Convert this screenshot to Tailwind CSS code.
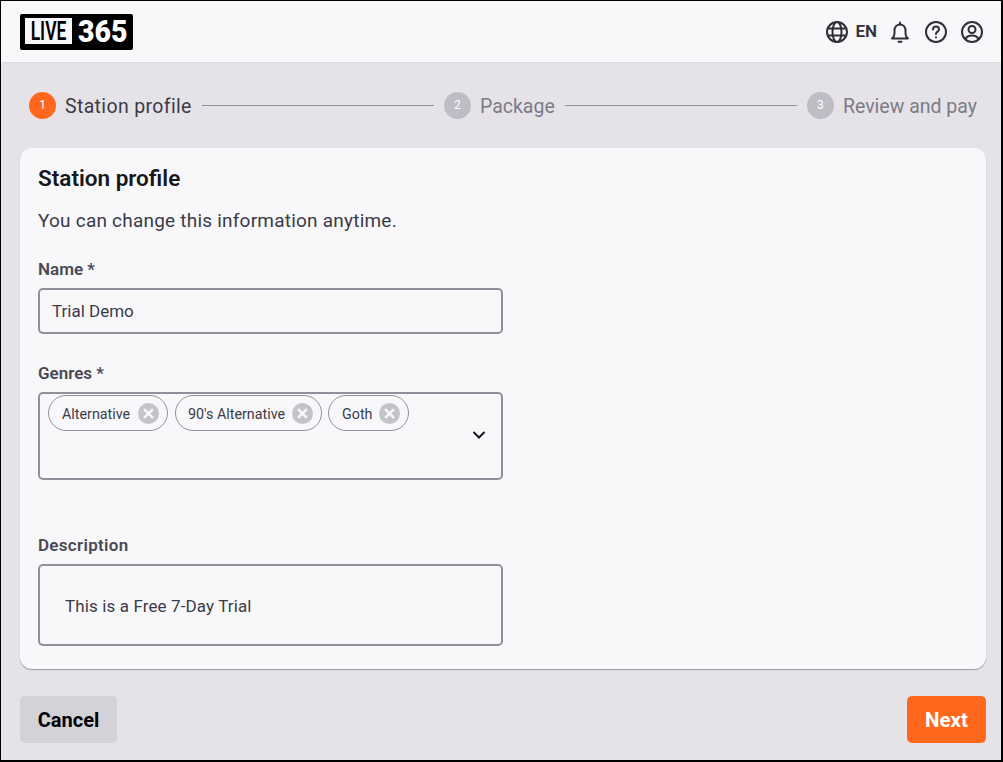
<!DOCTYPE html>
<html lang="en">
  <head>
    <meta charset="UTF-8" />
    <title>Station profile</title>
    <script src="https://cdn.jsdelivr.net/npm/@tailwindcss/browser@4"></script>
  </head>
  <body class="m-0 font-['Roboto',sans-serif]">
    <div class="w-[1003px] h-[762px] flex flex-col overflow-hidden bg-[#e5e3e8] border border-black border-r-2 border-b-2">
      <!-- Header -->
      <header class="h-[62px] shrink-0 flex items-center justify-between bg-[#f8f8fa] border-b border-[#dcdbe0] pl-[19px] pr-[17px]">
        <div class="w-[113px] h-[36px] flex items-center bg-black rounded-[2px] overflow-hidden">
          <div class="w-[47px] h-[26px] ml-[5px] mb-[1px] bg-[#f8f8fa] flex items-center justify-center text-black font-semibold text-[25px] leading-none">
            <span class="shrink-0 scale-x-[.7] origin-center">LIVE</span>
          </div>
          <span class="ml-[6px] shrink-0 text-white font-black text-[31px] leading-none scale-x-[.92] origin-left">365</span>
        </div>
        <div class="flex items-center text-[#2f2f37]">
          <svg class="w-[24px] h-[24px]" viewBox="0 0 24 24" fill="none" stroke="currentColor" stroke-width="2"><circle cx="12" cy="12" r="10"/><ellipse cx="12" cy="12" rx="4.500" ry="10"/><path d="M2.600 8.500h18.800M2.600 15.500h18.800"/></svg>
          <span class="ml-[6px] text-[17px] font-semibold">EN</span>
          <svg class="ml-[11px] w-[24px] h-[24px]" viewBox="0 0 24 24" fill="none" stroke="currentColor" stroke-width="2" stroke-linejoin="round" stroke-linecap="round"><path d="M4 18.500c1.700-1.300 2.500-2.600 2.500-5V10a5.500 5.500 0 0 1 11 0v3.500c0 2.400.8 3.700 2.500 5z"/><path d="M12 2.500v2"/><path d="M10.500 21.800h3"/></svg>
          <svg class="ml-[12px] w-[24px] h-[24px]" viewBox="0 0 24 24" fill="none" stroke="currentColor" stroke-width="2" stroke-linecap="round" stroke-linejoin="round"><circle cx="12" cy="12" r="10"/><path d="M9 9.500a3 3 0 0 1 6 0c0 2-3 2.300-3 4.500"/><path d="M12 17.300v.2"/></svg>
          <svg class="ml-[12px] w-[24px] h-[24px]" viewBox="0 0 24 24" fill="none" stroke="currentColor" stroke-width="2" stroke-linecap="round"><circle cx="12" cy="12" r="10"/><circle cx="12" cy="9.500" r="3.500"/><path d="M5.500 19c1-2.300 3.500-3.500 6.500-3.500s5.500 1.200 6.500 3.500"/></svg>
        </div>
      </header>

      <!-- Stepper -->
      <div class="h-[85px] shrink-0 flex items-center pl-[28px] pr-[24px] pb-[1px]">
        <span class="w-[27px] h-[27px] rounded-full bg-[#ff671d] text-white text-[12px] flex items-center justify-center">1</span>
        <span class="ml-[9px] mt-[3px] text-[19.500px] tracking-[.35px] text-[#3b3b47]">Station profile</span>
        <div class="flex-1 h-px bg-[#918f99] mx-[10px]"></div>
        <span class="w-[27px] h-[27px] rounded-full bg-[#bebcc5] text-white text-[12px] flex items-center justify-center">2</span>
        <span class="ml-[9px] mt-[3px] text-[19.500px] text-[#7c7b87]">Package</span>
        <div class="flex-1 h-px bg-[#918f99] mx-[10px]"></div>
        <span class="w-[27px] h-[27px] rounded-full bg-[#bebcc5] text-white text-[12px] flex items-center justify-center">3</span>
        <span class="ml-[9px] mt-[3px] text-[19.500px] text-[#7c7b87]">Review and pay</span>
      </div>

      <!-- Card -->
      <main class="ml-[19px] w-[966px] h-[521px] shrink-0 bg-[#f8f8fa] rounded-[12px] shadow-[0_1px_1px_#9a98a0] px-[18px] pt-[15px]">
        <h1 class="text-[22.500px] leading-[30px] font-semibold text-[#17171c]">Station profile</h1>
        <p class="mt-[15px] text-[19px] tracking-[.22px] leading-[26px] text-[#3b3b47]">You can change this information anytime.</p>

        <label class="block mt-[23px] text-[17px] leading-[24px] font-semibold text-[#4a4953]">Name *</label>
        <div class="mt-[7px] w-[465px] h-[46px] border-2 border-[#918f99] rounded-[5px] flex items-center px-[12px] pt-[2px] text-[17px] text-[#3b3b47]">Trial Demo</div>

        <label class="block mt-[27px] text-[17px] leading-[24px] font-semibold text-[#4a4953]">Genres *</label>
        <div class="relative mt-[7px] w-[465px] h-[88px] border-2 border-[#918f99] rounded-[5px] pl-[8px] pt-[1px] flex items-start gap-[7px] text-[14.300px] text-[#3b3b47]">
          <div class="h-[36px] w-[120px] border border-[#918f99] rounded-full flex items-center justify-between pl-[13px] pr-[8px]">
            <span class="pt-[3px]">Alternative</span>
            <svg class="w-[21px] h-[21px]" viewBox="0 0 20 20"><circle cx="10" cy="10" r="10" fill="#c5c3ca"/><path d="M5.800 5.800l8.400 8.400M14.200 5.800l-8.400 8.400" stroke="#f8f8fa" stroke-width="2.400"/></svg>
          </div>
          <div class="h-[36px] w-[147px] border border-[#918f99] rounded-full flex items-center justify-between pl-[12px] pr-[8px]">
            <span class="pt-[3px]">90's Alternative</span>
            <svg class="w-[21px] h-[21px]" viewBox="0 0 20 20"><circle cx="10" cy="10" r="10" fill="#c5c3ca"/><path d="M5.800 5.800l8.400 8.400M14.200 5.800l-8.400 8.400" stroke="#f8f8fa" stroke-width="2.400"/></svg>
          </div>
          <div class="h-[36px] w-[81px] -ml-px border border-[#918f99] rounded-full flex items-center justify-between pl-[13px] pr-[8px]">
            <span class="pt-[3px]">Goth</span>
            <svg class="w-[21px] h-[21px]" viewBox="0 0 20 20"><circle cx="10" cy="10" r="10" fill="#c5c3ca"/><path d="M5.800 5.800l8.400 8.400M14.200 5.800l-8.400 8.400" stroke="#f8f8fa" stroke-width="2.400"/></svg>
          </div>
          <svg class="absolute right-[15px] top-[36px] w-[14px] h-[10px]" viewBox="0 0 14 10" fill="none" stroke="#17171c" stroke-width="2"><path d="M1.500 2l5.500 5.500L12.500 2"/></svg>
        </div>

        <label class="block mt-[53px] text-[17px] tracking-[.3px] leading-[24px] font-semibold text-[#4a4953]">Description</label>
        <div class="mt-[7px] w-[465px] h-[82px] border-2 border-[#918f99] rounded-[5px] pl-[25px] pt-[28px] text-[17px] tracking-[.12px] leading-[24px] text-[#3b3b47]">This is a Free 7-Day Trial</div>
      </main>

      <!-- Footer -->
      <footer class="flex justify-between ml-[19px] w-[966px] mt-[27px]">
        <button class="w-[97px] h-[47px] bg-[#d3d2d9] rounded-[5px] text-[20px] font-bold text-black">Cancel</button>
        <button class="w-[79px] h-[47px] pt-[1px] bg-[#ff671d] rounded-[5px] text-[20.500px] font-bold text-white">Next</button>
      </footer>
    </div>
  </body>
</html>
